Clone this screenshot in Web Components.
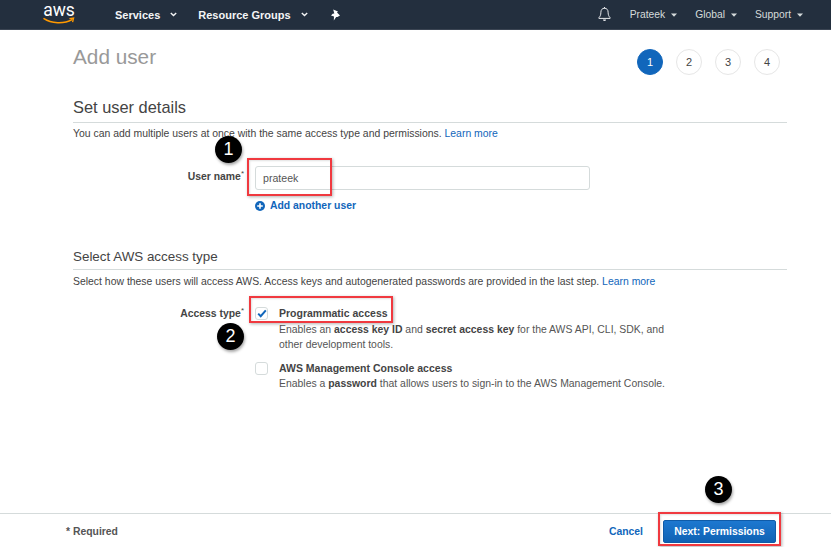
<!DOCTYPE html>
<html>
<head>
<meta charset="utf-8">
<title>Add user</title>
<style>
  html, body { margin: 0; height: 100%; overflow: hidden; background: #fff; }
  body { font-family: "Liberation Sans", Arial, sans-serif; font-size: 11px; color: #444; }
  b { color: #444; }
</style>
</head>
<body>
<add-user-page>
  <aws-nav slot="nav"></aws-nav>

  <page-head slot="head" heading="Add user" current="1" steps="4"></page-head>

  <form-section heading="Set user details">
    <span slot="intro">You can add multiple users at once with the same access type and permissions. <a-link>Learn more</a-link></span>
    <field-row label="User name" style="margin-top:26px;--label-top:4px">
      <user-input value="prateek"></user-input>
      <add-link>Add another user</add-link>
    </field-row>
  </form-section>

  <form-section small heading="Select AWS access type" style="margin-top:36px">
    <span slot="intro">Select how these users will access AWS. Access keys and autogenerated passwords are provided in the last step. <a-link>Learn more</a-link></span>
    <field-row label="Access type" style="margin-top:18px;--label-top:1px">
      <access-option checked heading="Programmatic access">Enables an <b>access key ID</b> and <b>secret access key</b> for the AWS API, CLI, SDK, and<br>other development tools.</access-option>
      <access-option heading="AWS Management Console access" style="margin-top:9px;--desc-gap:1px">Enables a <b>password</b> that allows users to sign-in to the AWS Management Console.</access-option>
    </field-row>
  </form-section>

  <page-footer slot="footer"></page-footer>

  <red-box slot="marks" style="left:247px;top:158px;width:81px;height:34px"></red-box>
  <red-box slot="marks" style="left:249px;top:296px;width:140px;height:23px"></red-box>
  <red-box slot="marks" style="left:658px;top:512px;width:119px;height:30px"></red-box>
  <step-mark slot="marks" style="left:215px;top:136px">1</step-mark>
  <step-mark slot="marks" style="left:217px;top:323px">2</step-mark>
  <step-mark slot="marks" style="left:705px;top:476px">3</step-mark>
</add-user-page>

<script>
const FONT = '"Liberation Sans", Arial, sans-serif';

class AddUserPage extends HTMLElement {
  constructor() {
    super();
    this.attachShadow({ mode: 'open' });
    this.shadowRoot.innerHTML = `
      <style>
        :host { display: flex; flex-direction: column; position: relative; width: 831px; height: 547px; overflow: hidden; }
        main { flex: 1; padding: 0 44px 0 73px; min-height: 0; }
      </style>
      <slot name="nav"></slot>
      <main>
        <slot name="head"></slot>
        <slot></slot>
      </main>
      <slot name="footer"></slot>
      <slot name="marks"></slot>
    `;
  }
}

class AwsNav extends HTMLElement {
  constructor() {
    super();
    this.attachShadow({ mode: 'open' });
    const caret = `<svg width="7" height="5" viewBox="0 0 7 5"><path d="M.8 1l2.7 2.6L6.2 1" fill="none" stroke="currentColor" stroke-width="1.4"/></svg>`;
    const solid = `<svg width="6" height="4" viewBox="0 0 6 4"><path d="M0 .5h6L3 3.7z" fill="currentColor"/></svg>`;
    this.shadowRoot.innerHTML = `
      <style>
        :host { display: flex; align-items: center; height: 29px; flex: none; background: #232f3e; border-bottom: 1px solid #3b4553;
                color: #fff; font: bold 11px ${FONT}; padding-left: 43px; box-sizing: content-box; }
        .logo { display: flex; flex-direction: column; align-items: center; width: 32px; height: 28px; align-self: flex-start; padding-top: 2px; box-sizing: border-box; position: relative; }
        .logo span { font: 400 17.5px/16px Roboto, sans-serif; color: #fff; }
        .logo svg { position: absolute; left: 0; top: 17px; }
        .item { display: flex; align-items: center; gap: 10px; }
        .item svg { display: block; }
        .left { color: #f4f5f6; }
        .right { color: #d5dbdb; font-weight: normal; font-size: 10.3px; gap: 6px; }
      </style>
      <div class="logo"><span>aws</span>
        <svg width="32" height="8" viewBox="0 0 32 8">
          <path d="M1 1.6C8 6.6 21 7.2 29 2.6" fill="none" stroke="#f90" stroke-width="1.5" stroke-linecap="round"/>
          <path d="M26.4 1.6l4.2-.6-1 4.2" fill="none" stroke="#f90" stroke-width="1.3"/>
        </svg>
      </div>
      <div class="item left" style="margin-left:40px">Services ${caret}</div>
      <div class="item left" style="margin-left:21px">Resource Groups ${caret}</div>
      <svg style="margin-left:22px" width="11" height="12" viewBox="0 0 11 12"><path d="M3.2.6L8 2.4 7 3.6l3 2.8-2.6 1.7-1.2-.2L3.8 11.5 4 7.6 1 6.6l1.7-1.8 1.6-.3z" fill="#fff"/></svg>
      <svg style="margin-left:auto" width="13" height="15" viewBox="0 0 13 15"><path d="M6.5 1.2c-2.4 0-3.6 1.8-3.6 4 0 3-.9 4.300-2 5.500v.7h11.200v-.7c-1.100-1.200-2-2.500-2-5.500 0-2.200-1.200-4-3.600-4z" fill="none" stroke="#e8eaed" stroke-width="1"/><path d="M5 12.600a1.500 1.500 0 0 0 3 0" fill="#e8eaed"/><path d="M6.500 0v1.500" stroke="#e8eaed"/></svg>
      <div class="item right" style="margin-left:19px">Prateek ${solid}</div>
      <div class="item right" style="margin-left:18px">Global ${solid}</div>
      <div class="item right" style="margin-left:18px;margin-right:28px">Support ${solid}</div>
    `;
  }
}

class PageHead extends HTMLElement {
  constructor() {
    super();
    this.attachShadow({ mode: 'open' });
    const current = Number(this.getAttribute('current'));
    const count = Number(this.getAttribute('steps'));
    let dots = '';
    for (let i = 1; i <= count; i++) {
      dots += `<span class="dot${i === current ? ' on' : ''}">${i}</span>`;
    }
    this.shadowRoot.innerHTML = `
      <style>
        :host { display: flex; justify-content: space-between; height: 63px; }
        h1 { margin: 14px 0 0; font: 400 20.750px/25px ${FONT}; color: #999; }
        .steps { display: flex; gap: 13px; margin: 19px 7px 0 0; align-self: flex-start; }
        .dot { width: 24px; height: 24px; border: 1px solid #e6e6e6; border-radius: 50%; display: flex; align-items: center; justify-content: center;
               font: 11px ${FONT}; color: #444; background: #fff; }
        .dot.on { background: #1166bb; border-color: #1166bb; color: #fff; }
      </style>
      <h1>${this.getAttribute('heading')}</h1>
      <div class="steps">${dots}</div>
    `;
  }
}

class FormSection extends HTMLElement {
  constructor() {
    super();
    this.attachShadow({ mode: 'open' });
    this.shadowRoot.innerHTML = `
      <style>
        :host { display: block; }
        h2 { margin: 0; padding: 4px 0 5px; height: 20px; font: 400 16.400px/20px ${FONT}; color: #444; border-bottom: 1px solid #d5dbdb; }
        .intro { margin-top: 4px; font: 10.430px/13px ${FONT}; color: #444; }
        :host([small]) h2 { padding: 0 0 4px; height: 16px; font-size: 13.400px; line-height: 16px; }
        :host([small]) .intro { margin-top: 5px; }
      </style>
      <h2>${this.getAttribute('heading')}</h2>
      <div class="intro"><slot name="intro"></slot></div>
      <slot></slot>
    `;
  }
}

class FieldRow extends HTMLElement {
  constructor() {
    super();
    this.attachShadow({ mode: 'open' });
    this.shadowRoot.innerHTML = `
      <style>
        :host { display: flex; }
        label { width: 171px; text-align: right; font: bold 10.400px/13px ${FONT}; color: #444; padding-top: var(--label-top, 5px); box-sizing: border-box; }
        sup { font-size: 8px; line-height: 0; font-weight: normal; }
        .body { margin-left: 11px; }
      </style>
      <label>${this.getAttribute('label')}<sup>*</sup></label>
      <div class="body"><slot></slot></div>
    `;
  }
}

class UserInput extends HTMLElement {
  constructor() {
    super();
    this.attachShadow({ mode: 'open' });
    this.shadowRoot.innerHTML = `
      <style>
        :host { display: block; }
        input { display: block; box-sizing: border-box; width: 335px; height: 24px; padding: 0 7px; border: 1px solid #d5dbdb; border-radius: 3px;
                font: 10.600px ${FONT}; color: #555; background: #fff; outline: none; }
      </style>
      <input type="text" value="${this.getAttribute('value')}">
    `;
  }
}

class AddLink extends HTMLElement {
  constructor() {
    super();
    this.attachShadow({ mode: 'open' });
    this.shadowRoot.innerHTML = `
      <style>
        :host { display: flex; align-items: center; gap: 5px; margin-top: 9px; font: bold 10.400px/14px ${FONT}; color: #1166bb; }
        svg { display: block; }
      </style>
      <svg width="10" height="10" viewBox="0 0 10 10"><circle cx="5" cy="5" r="5" fill="#1166bb"/><path d="M5 2.200v5.600M2.200 5h5.600" stroke="#fff" stroke-width="1.600"/></svg>
      <slot></slot>
    `;
  }
}

class ALink extends HTMLElement {
  constructor() {
    super();
    this.attachShadow({ mode: 'open' });
    this.shadowRoot.innerHTML = `<style>:host { color: #1166bb; }</style><slot></slot>`;
  }
}

class AccessOption extends HTMLElement {
  constructor() {
    super();
    this.attachShadow({ mode: 'open' });
    const tick = this.hasAttribute('checked')
      ? `<svg width="10" height="9" viewBox="0 0 10 9"><path d="M1.200 4.600l2.500 2.600L8.800 1.400" fill="none" stroke="#1166bb" stroke-width="2"/></svg>`
      : '';
    this.shadowRoot.innerHTML = `
      <style>
        :host { display: flex; gap: 11px; }
        .box { flex: none; box-sizing: border-box; width: 13px; height: 13px; margin: 1px 0 0 0; border: 1px solid #d5dbdb; border-radius: 3px; display: flex; align-items: center; justify-content: center; background: #fff; }
        .head { font: bold 10.500px/14px ${FONT}; color: #444; }
        .desc { margin-top: var(--desc-gap, 2px); font: 10.430px/15px ${FONT}; color: #555; }
      </style>
      <div class="box">${tick}</div>
      <div>
        <div class="head">${this.getAttribute('heading')}</div>
        <div class="desc"><slot></slot></div>
      </div>
    `;
  }
}

class PageFooter extends HTMLElement {
  constructor() {
    super();
    this.attachShadow({ mode: 'open' });
    this.shadowRoot.innerHTML = `
      <style>
        :host { display: flex; align-items: center; flex: none; height: 32px; border-top: 1px solid #d5dbdb; padding: 1px 55px 0 66px; font: bold 10.400px ${FONT}; }
        .req { color: #555; }
        .cancel { margin-left: auto; color: #1166bb; }
        .next { margin-left: 20px; width: 113px; height: 23px; border: 1px solid #0f5ba8; border-radius: 2px; display: flex; align-items: center; justify-content: center;
                box-sizing: border-box; color: #fff; background: linear-gradient(#1d78d0, #0f62b4); }
      </style>
      <span class="req">* Required</span>
      <span class="cancel">Cancel</span>
      <span class="next">Next: Permissions</span>
    `;
  }
}

class RedBox extends HTMLElement {
  constructor() {
    super();
    this.attachShadow({ mode: 'open' });
    this.shadowRoot.innerHTML = `
      <style>
        :host { display: block; position: absolute; border: 2px solid #f0393f; box-shadow: 1px 1px 3px rgba(0,0,0,.3), inset 1px 1px 2px rgba(0,0,0,.12); }
      </style>
    `;
  }
}

class StepMark extends HTMLElement {
  constructor() {
    super();
    this.attachShadow({ mode: 'open' });
    this.shadowRoot.innerHTML = `
      <style>
        :host { display: flex; align-items: center; justify-content: center; position: absolute; width: 27px; height: 27px; border-radius: 50%;
                background: #000; color: #fff; font: 18px ${FONT}; box-shadow: 1px 2px 3px rgba(0,0,0,.35); }
      </style>
      <slot></slot>
    `;
  }
}

customElements.define('add-user-page', AddUserPage);
customElements.define('aws-nav', AwsNav);
customElements.define('page-head', PageHead);
customElements.define('form-section', FormSection);
customElements.define('field-row', FieldRow);
customElements.define('user-input', UserInput);
customElements.define('add-link', AddLink);
customElements.define('a-link', ALink);
customElements.define('access-option', AccessOption);
customElements.define('page-footer', PageFooter);
customElements.define('red-box', RedBox);
customElements.define('step-mark', StepMark);
</script>
</body>
</html>
